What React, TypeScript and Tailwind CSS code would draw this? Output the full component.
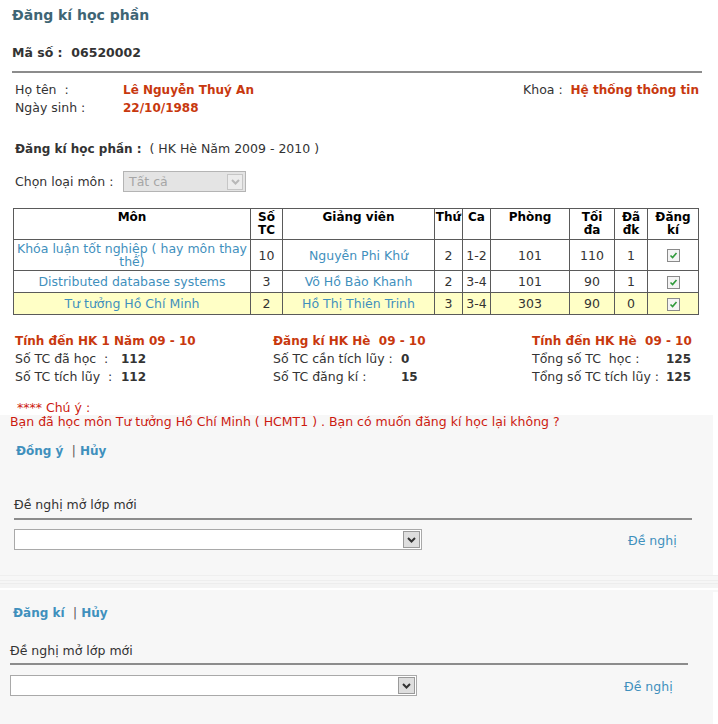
import React from 'react';

const rows = [
  { mon: 'Khóa luận tốt nghiệp ( hay môn thay thế)', tc: '10', gv: 'Nguyễn Phi Khứ', thu: '2', ca: '1-2', phong: '101', toida: '110', dadk: '1', h: 'h-[31px]', bg: 'bg-white' },
  { mon: 'Distributed database systems', tc: '3', gv: 'Võ Hồ Bảo Khanh', thu: '2', ca: '3-4', phong: '101', toida: '90', dadk: '1', h: 'h-[22px]', bg: 'bg-white' },
  { mon: 'Tư tưởng Hồ Chí Minh', tc: '2', gv: 'Hồ Thị Thiên Trinh', thu: '3', ca: '3-4', phong: '303', toida: '90', dadk: '0', h: 'h-[22px]', bg: 'bg-[#ffffc6]' },
];

const headers = [['Môn'], ['Số', 'TC'], ['Giảng viên'], ['Thứ'], ['Ca'], ['Phòng'], ['Tối', 'đa'], ['Đã', 'đk'], ['Đăng', 'kí']];

function Check() {
  return (
    <span className="inline-flex w-[13px] h-[13px] border border-[#8a8a8a] bg-[#f4f4f4] items-center justify-center align-middle">
      <svg width="9" height="9" viewBox="0 0 9 9">
        <path d="M1.5 4.5 L3.6 6.6 L7.5 2" fill="none" stroke="#2f9a3a" strokeWidth="1.6" />
      </svg>
    </span>
  );
}

function Chevron({ color }: { color: string }) {
  return (
    <svg width="9" height="6" viewBox="0 0 9 6">
      <path d="M1 1 L4.5 4.5 L8 1" fill="none" stroke={color} strokeWidth="2" />
    </svg>
  );
}

function SelectBox({ width }: { width: string }) {
  return (
    <div className={`${width} h-[21px] border border-[#a9a9a9] bg-white flex items-center justify-end pr-[1px]`}>
      <span className="w-[17px] h-[17px] border border-[#9a9a9a] bg-[#dedede] flex items-center justify-center">
        <Chevron color="#333" />
      </span>
    </div>
  );
}

function Stat({ label, value, w }: { label: string; value: string; w: string }) {
  return (
    <div className="flex h-[18px] items-center">
      <span className={`${w} whitespace-pre`}>{label}</span>
      <span className="font-bold text-[12px] text-[#333]">{value}</span>
    </div>
  );
}

export default function App() {
  return (
    <div className="w-[718px] h-[724px] overflow-hidden bg-white text-[#333] text-[12.5px] leading-[18px] font-['DejaVu_Sans',sans-serif]">
      <div className="px-3 pt-[5px]">
        <h1 className="text-[14px] leading-[20px] font-bold text-[#3e6575]">Đăng kí học phần</h1>
        <div className="mt-[19px] font-bold text-[12.5px] text-[#333] whitespace-pre">Mã số :  06520002</div>
        <div className="mt-[9px] h-[2px] bg-[#8c8c8c] mr-[4px]" />

        <div className="mt-[8px] pl-[3px] pr-[7px]">
          <div className="flex h-[18px] items-center">
            <span className="w-[108px] whitespace-pre">Họ tên  :</span>
            <span className="font-bold text-[12px] text-[#c8380e]">Lê Nguyễn Thuý An</span>
            <span className="ml-auto whitespace-pre">Khoa :  <b className="text-[12px] text-[#c8380e]">Hệ thống thông tin</b></span>
          </div>
          <div className="flex h-[18px] items-center">
            <span className="w-[108px] whitespace-pre">Ngày sinh :</span>
            <span className="font-bold text-[12px] text-[#c8380e]">22/10/1988</span>
          </div>
        </div>

        <div className="mt-[23px] pl-[3px] whitespace-pre">
          <b className="text-[12px]">Đăng kí học phần :</b>  ( HK Hè Năm 2009 - 2010 )
        </div>

        <div className="mt-[13px] pl-[3px] flex items-center h-[21px]">
          <span className="w-[108px]">Chọn loại môn :</span>
          <div className="w-[123px] h-[21px] border border-[#b4b4b4] bg-[#e4e4e4] flex items-center justify-between pl-[5px] pr-[2px] text-[#a6a6a6]">
            <span>Tất cả</span>
            <span className="w-[16px] h-[16px] border border-[#c6c6c6] bg-[#ececec] flex items-center justify-center">
              <Chevron color="#b8b8b8" />
            </span>
          </div>
        </div>

        <table className="mt-[16px] ml-[1px] w-[685px] table-fixed border-collapse border border-[#5a5a5a] leading-[13px]">
          <colgroup>
            <col className="w-[237px]" />
            <col className="w-[32px]" />
            <col className="w-[152px]" />
            <col className="w-[28px]" />
            <col className="w-[28px]" />
            <col className="w-[79px]" />
            <col className="w-[45px]" />
            <col className="w-[33px]" />
            <col className="w-[51px]" />
          </colgroup>
          <thead>
            <tr className="h-[31px] text-black">
              {headers.map((t) => (
                <th key={t.join(' ')} className="border border-[#5a5a5a] align-top pt-[2px] px-0 text-center font-bold text-[12px]">
                  {t.map((line) => (
                    <div key={line} className="h-[13px] leading-[13px]">{line}</div>
                  ))}
                </th>
              ))}
            </tr>
          </thead>
          <tbody>
            {rows.map((r) => (
              <tr key={r.mon} className={`${r.h} ${r.bg} text-center`}>
                <td className="border border-[#5a5a5a] text-[#3f90bd] px-[2px]">{r.mon}</td>
                <td className="border border-[#5a5a5a]">{r.tc}</td>
                <td className="border border-[#5a5a5a] text-[#3f90bd]">{r.gv}</td>
                <td className="border border-[#5a5a5a]">{r.thu}</td>
                <td className="border border-[#5a5a5a]">{r.ca}</td>
                <td className="border border-[#5a5a5a]">{r.phong}</td>
                <td className="border border-[#5a5a5a]">{r.toida}</td>
                <td className="border border-[#5a5a5a]">{r.dadk}</td>
                <td className="border border-[#5a5a5a]">
                  <Check />
                </td>
              </tr>
            ))}
          </tbody>
        </table>

        <div className="mt-[17px] pl-[3px] flex">
          <div className="w-[258px]">
            <div className="font-bold text-[12px] text-[#c8380e] h-[18px]">Tính đến HK 1 Năm 09 - 10</div>
            <Stat label="Số TC đã học  :" value="112" w="w-[106px]" />
            <Stat label="Số TC tích lũy  :" value="112" w="w-[106px]" />
          </div>
          <div className="w-[259px]">
            <div className="font-bold text-[12px] text-[#c8380e] h-[18px] whitespace-pre">Đăng kí HK Hè  09 - 10</div>
            <Stat label="Số TC cần tích lũy :" value="0" w="w-[128px]" />
            <Stat label="Số TC đăng kí :" value="15" w="w-[128px]" />
          </div>
          <div>
            <div className="font-bold text-[12px] text-[#c8380e] h-[18px] whitespace-pre">Tính đến HK Hè  09 - 10</div>
            <Stat label="Tổng số TC  học :" value="125" w="w-[134px]" />
            <Stat label="Tổng số TC tích lũy :" value="125" w="w-[134px]" />
          </div>
        </div>

        <div className="mt-[15px] pl-[5px] leading-[14px] text-[#cc1a10]">**** Chú ý :</div>
      </div>

      <div className="w-[713px] bg-[#f7f7f7] pl-[10px] pb-[25px]">
        <div className="leading-[14px] text-[#cc1a10]">
          Bạn đã học môn Tư tưởng Hồ Chí Minh ( HCMT1 ) . Bạn có muốn đăng kí học lại không ?
        </div>
        <div className="mt-[13px] ml-[6px] font-bold text-[12px] text-[#3f90bd] whitespace-pre">
          Đồng ý  <span className="font-normal text-[#555]">|</span> Hủy
        </div>
        <div className="mt-[36px] ml-[4px]">Đề nghị mở lớp mới</div>
        <div className="mt-[4px] ml-[4px] w-[678px] h-[2px] bg-[#8c8c8c]" />
        <div className="mt-[9px] ml-[4px] flex items-center h-[21px]">
          <SelectBox width="w-[408px]" />
          <span className="ml-[206px] mt-[2px] text-[#3f90bd]">Đề nghị</span>
        </div>
      </div>

      <div className="h-[17px] flex flex-col">
        <div className="h-[1px] bg-[#efefef]" />
        <div className="h-[4px] bg-[#f7f7f7]" />
        <div className="h-[1px] bg-[#eeeeee]" />
        <div className="h-[2px] bg-[#f6f6f6]" />
        <div className="h-[1px] bg-[#ededed]" />
        <div className="h-[4px] bg-[#f4f4f4]" />
        <div className="h-[2px] bg-white" />
        <div className="h-[2px] bg-[#f7f7f7]" />
      </div>

      <div className="w-[713px] h-[200px] bg-[#f7f7f7] pl-[10px] pt-[12px]">
        <div className="ml-[3px] font-bold text-[12px] text-[#3f90bd] whitespace-pre">
          Đăng kí  <span className="font-normal text-[#555]">|</span> Hủy
        </div>
        <div className="mt-[20px]">Đề nghị mở lớp mới</div>
        <div className="mt-[3px] w-[678px] h-[2px] bg-[#8c8c8c]" />
        <div className="mt-[10px] flex items-center h-[21px]">
          <SelectBox width="w-[407px]" />
          <span className="ml-[207px] mt-[2px] text-[#3f90bd]">Đề nghị</span>
        </div>
      </div>
    </div>
  );
}
